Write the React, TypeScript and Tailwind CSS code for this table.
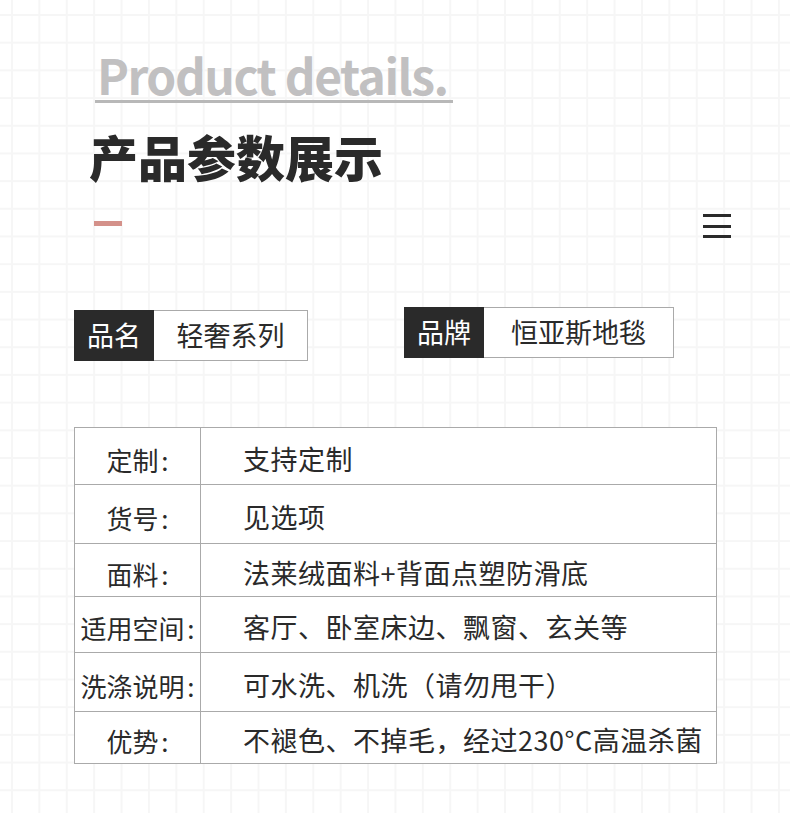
import React from 'react';

const specs = [
  { label: '定制', value: '支持定制', h: 'h-[57px]' },
  { label: '货号', value: '见选项', h: 'h-[59px]' },
  { label: '面料', value: '法莱绒面料+背面点塑防滑底', h: 'h-[53px]' },
  { label: '适用空间', value: '客厅、卧室床边、飘窗、玄关等', h: 'h-[56px]' },
  { label: '洗涤说明', value: '可水洗、机洗（请勿甩干）', h: 'h-[59px]' },
  { label: '优势', value: '不褪色、不掉毛，经过230°C高温杀菌', h: 'h-[52px]' },
];

function Tag({ name, value, valueWidth }: { name: string; value: string; valueWidth: string }) {
  return (
    <div className="flex h-[51px]">
      <div className="flex items-center bg-[#2a2a2a] px-[13px] text-[27px] text-white">{name}</div>
      <div className={`flex items-center justify-center border border-l-0 border-[#aaaaaa] bg-white text-[27px] text-[#2a2a2a] ${valueWidth}`}>
        {value}
      </div>
    </div>
  );
}

export default function App() {
  return (
    <div className="min-h-[813px] w-full bg-white bg-[linear-gradient(to_right,#f6f6f6_2px,transparent_2px),linear-gradient(to_bottom,#f6f6f6_2px,transparent_2px)] bg-size-[27.4px_27.7px] bg-position-[11px_14px] font-['Noto_Sans_CJK_SC',sans-serif] pb-[50px]">
      {/* Header */}
      <div className="pt-[48px] pl-[95px]">
        <div className="inline-block border-b-[3px] border-[#b8b8b8] pl-[2px] pr-[5px] text-[48px] font-bold leading-[52px] tracking-[-1.5px] text-[#c1c0c1]">
          Product details.
        </div>
      </div>
      <h1 className="mt-[27px] pl-[89px] text-[49px] font-black leading-[52px] text-[#2a2a2a]">产品参数展示</h1>

      <div className="mt-[32px] flex items-start justify-between pl-[94px] pr-[59px]">
        <div className="mt-[7px] h-[5px] w-[28px] bg-[#d4918a]" />
        <div className="flex flex-col gap-[7.5px]">
          <span className="block h-[3px] w-[28px] bg-[#2a2a2a]" />
          <span className="block h-[3px] w-[28px] bg-[#2a2a2a]" />
          <span className="block h-[3px] w-[28px] bg-[#2a2a2a]" />
        </div>
      </div>

      {/* Tags */}
      <div className="mt-[69px] flex items-start pl-[74px]">
        <div className="mt-[3px]">
          <Tag name="品名" value="轻奢系列" valueWidth="w-[154px]" />
        </div>
        <div className="ml-[96px]">
          <Tag name="品牌" value="恒亚斯地毯" valueWidth="w-[190px]" />
        </div>
      </div>

      {/* Spec table */}
      <div className="mt-[66px] pl-[74px]">
        <table className="w-[643px] border-collapse bg-white text-[#2a2a2a]">
          <tbody>
            {specs.map((row) => (
              <tr key={row.label} className={row.h}>
                <td className="w-[126px] border border-[#aaaaaa] p-0 pt-[6px] text-center text-[26px]">
                  {row.label}
                  <span className="inline-block w-[10px] text-right">:</span>
                </td>
                <td className="border border-[#aaaaaa] p-0 pt-[6px] pl-[42px] whitespace-nowrap text-[27px] tracking-[0.5px]">
                  {row.value}
                </td>
              </tr>
            ))}
          </tbody>
        </table>
      </div>
    </div>
  );
}
